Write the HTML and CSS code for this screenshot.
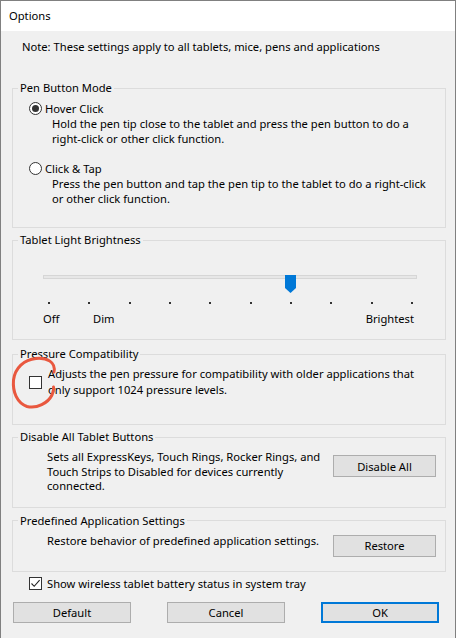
FILE: index.html
```html
<!DOCTYPE html>
<html>
<head>
<meta charset="utf-8">
<link rel="stylesheet" href="styles.css">
</head>
<body>
<div class="window">
  <div class="titlebar">Options</div>
  <div class="content">
    <p class="note">Note: These settings apply to all tablets, mice, pens and applications</p>

    <fieldset class="group group-pen">
      <legend>Pen Button Mode</legend>
      <div class="pen-body">
        <div class="option">
          <div class="option-row"><span class="radio checked"></span><span>Hover Click</span></div>
          <div class="option-desc">Hold the pen tip close to the tablet and press the pen button to do a<br>right-click or other click function.</div>
        </div>
        <div class="option option-2">
          <div class="option-row"><span class="radio"></span><span>Click &amp; Tap</span></div>
          <div class="option-desc">Press the pen button and tap the pen tip to the tablet to do a right-click<br>or other click function.</div>
        </div>
      </div>
    </fieldset>

    <fieldset class="group group-light">
      <legend>Tablet Light Brightness</legend>
      <div class="light-body">
        <div class="slider">
          <div class="track"></div>
          <svg class="thumb" width="11" height="18" viewBox="0 0 11 18"><path d="M0 0H11V13L5.5 18L0 13Z" fill="#0078d7"/></svg>
        </div>
        <div class="ticks">
          <span></span><span></span><span></span><span></span><span></span>
          <span></span><span></span><span></span><span></span><span></span>
        </div>
        <div class="labels"><span>Off</span><span>Dim</span><span class="lbl-end">Brightest</span></div>
      </div>
    </fieldset>

    <fieldset class="group group-pressure">
      <legend>Pressure Compatibility</legend>
      <div class="pressure-body">
        <span class="checkbox"></span>
        <div class="pressure-text">Adjusts the pen pressure for compatibility with older applications that<br>only support 1024 pressure levels.</div>
      </div>
    </fieldset>

    <fieldset class="group group-disable">
      <legend>Disable All Tablet Buttons</legend>
      <div class="action-body">
        <div class="action-text disable-text">Sets all ExpressKeys, Touch Rings, Rocker Rings, and<br>Touch Strips to Disabled for devices currently<br>connected.</div>
        <button class="btn btn-side">Disable All</button>
      </div>
    </fieldset>

    <fieldset class="group group-predef">
      <legend>Predefined Application Settings</legend>
      <div class="action-body">
        <div class="action-text predef-text">Restore behavior of predefined application settings.</div>
        <button class="btn btn-side">Restore</button>
      </div>
    </fieldset>

    <div class="tray-row">
      <span class="checkbox checked"><svg width="11" height="11" viewBox="0 0 11 11"><path d="M1.5 5.5L4.2 8.3L9.6 2.2" fill="none" stroke="#222" stroke-width="1.1"/></svg></span>
      <span>Show wireless tablet battery status in system tray</span>
    </div>

    <div class="footer">
      <button class="btn btn-foot">Default</button>
      <button class="btn btn-foot">Cancel</button>
      <button class="btn btn-foot btn-default">OK</button>
    </div>
  </div>

  <svg class="annotation" width="456" height="638" viewBox="0 0 456 638">
    <path d="M54 372 C56 362 47 357.5 36 358.5 C24 359.5 15 368 13.5 380 C12.5 392 17 403 27 406.5 C37 409 48 403 52 395 C53.5 391 54 389 53.5 387" fill="none" stroke="#e9583f" stroke-width="3" stroke-linecap="round"/>
  </svg>
</div>
</body>
</html>
```

FILE: styles.css
```css
* { box-sizing: border-box; }

html, body {
  margin: 0;
  padding: 0;
  background: #f0f0f0;
}

body {
  font-family: "Segoe UI", "Noto Sans", sans-serif;
  font-size: 11.2px;
  color: #000;
}

.window {
  position: relative;
  width: 456px;
  height: 638px;
  background: #f0f0f0;
  border-top: 1px solid #808080;
  border-left: 1px solid #808080;
  border-right: 1px solid #808080;
  overflow: hidden;
}

.titlebar {
  height: 30px;
  background: #fff;
  padding-left: 8px;
  line-height: 30px;
}

.content {
  padding: 8px 9px 0 11px;
}

.note {
  margin: 0 0 25px 10px;
  line-height: 16px;
  white-space: nowrap;
}

.group {
  margin: 0;
  padding: 0;
  border: 1px solid #dcdcdc;
  min-width: 0;
}

.group legend {
  margin-left: 5px;
  padding: 0 2px;
  line-height: 16px;
  height: 16px;
}

.group-light { margin-top: 4px; }
.group-pressure { margin-top: 6px; }
.group-disable { margin-top: 4px; }
.group-predef { margin-top: 5px; }

/* Pen button mode */
.pen-body {
  padding: 5px 12px 21px 16px;
  line-height: 15px;
  white-space: nowrap;
}

.option-row {
  display: flex;
  align-items: center;
  gap: 3px;
}

.option-desc {
  padding-left: 23px;
}

.option-2 { margin-top: 15px; }

.radio {
  width: 13px;
  height: 13px;
  border: 1px solid #333;
  border-radius: 50%;
  background: #fff;
  display: inline-flex;
  align-items: center;
  justify-content: center;
  flex: none;
}

.radio.checked::after {
  content: "";
  width: 7px;
  height: 7px;
  border-radius: 50%;
  background: #333;
}

/* Slider */
.light-body {
  padding: 21px 0 12px 30px;
}

.slider {
  position: relative;
  width: 374px;
  height: 18px;
}

.track {
  margin-top: 6px;
  height: 4px;
  background: #e7e7e7;
  border: 1px solid #d6d6d6;
}

.thumb {
  position: absolute;
  left: 242px;
  top: 0;
  display: block;
}

.ticks {
  display: flex;
  justify-content: space-between;
  width: 365px;
  margin: 9px 0 0 5px;
  height: 2px;
}

.ticks span {
  width: 2px;
  height: 2px;
  background: #333;
}

.labels {
  display: grid;
  grid-template-columns: 50px 1fr auto;
  width: 371px;
  margin-top: 7px;
  line-height: 16px;
}

/* Pressure */
.pressure-body {
  display: flex;
  align-items: center;
  padding: 4px 0 26px 16px;
  line-height: 16px;
  white-space: nowrap;
}

.checkbox {
  width: 13px;
  height: 13px;
  border: 1px solid #333;
  background: #fff;
  flex: none;
  display: inline-flex;
  align-items: center;
  justify-content: center;
}

.pressure-text {
  margin-left: 6px;
}

/* Action groups */
.action-body {
  display: flex;
  align-items: flex-start;
  padding-left: 34px;
  padding-right: 9px;
  white-space: nowrap;
}

.action-text { flex: 1; }

.disable-text {
  padding-top: 5px;
  line-height: 14.5px;
}

.group-disable .action-body { padding-bottom: 13px; }
.group-disable .btn-side { margin-top: 10px; }

.predef-text {
  padding-top: 4px;
  line-height: 15px;
}

.group-predef .action-body { padding-bottom: 14px; }
.group-predef .btn-side { margin-top: 6px; }

.btn {
  font: inherit;
  color: #000;
  background: #e1e1e1;
  border: 1px solid #adadad;
  border-radius: 0;
  padding: 0;
  margin: 0;
}

.btn-side {
  width: 103px;
  height: 22px;
  flex: none;
}

/* Tray row */
.tray-row {
  display: flex;
  align-items: center;
  gap: 5px;
  margin-top: 4px;
  padding-left: 17px;
  line-height: 16px;
  white-space: nowrap;
}

/* Footer */
.footer {
  display: flex;
  justify-content: space-between;
  margin: 10px 7px 0 1px;
}

.btn-foot {
  width: 118px;
  height: 21px;
}

.btn-default {
  border: 2px solid #0078d7;
}

.annotation {
  position: absolute;
  left: -1px;
  top: -1px;
  pointer-events: none;
}
```
